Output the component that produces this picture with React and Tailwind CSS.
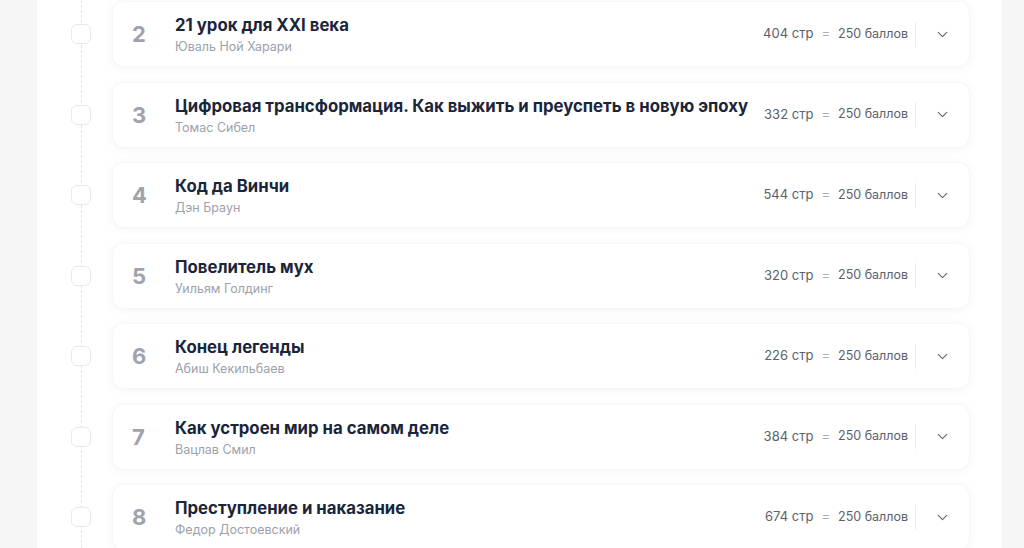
import React from 'react';
import { ChevronDown } from 'lucide-react';

const books = [
  { n: 2, title: '21 урок для XXI века', author: 'Юваль Ной Харари', pages: 404 },
  { n: 3, title: 'Цифровая трансформация. Как выжить и преуспеть в новую эпоху', author: 'Томас Сибел', pages: 332 },
  { n: 4, title: 'Код да Винчи', author: 'Дэн Браун', pages: 544 },
  { n: 5, title: 'Повелитель мух', author: 'Уильям Голдинг', pages: 320 },
  { n: 6, title: 'Конец легенды', author: 'Абиш Кекильбаев', pages: 226 },
  { n: 7, title: 'Как устроен мир на самом деле', author: 'Вацлав Смил', pages: 384 },
  { n: 8, title: 'Преступление и наказание', author: 'Федор Достоевский', pages: 674 },
];

const BookRow = ({ book }) => (
  <div className="flex items-center">
    <div className="w-[75px] shrink-0 pl-[34px]">
      <div className="relative z-10 w-5 h-5 rounded-md border border-[#e8e9ec] bg-white"></div>
    </div>
    <div className="flex-1 h-[66px] flex items-center bg-white rounded-xl border border-[#f7f7f8] shadow-[0_1px_10px_rgba(0,0,0,0.05)] pl-[19px]">
      <div className="w-[43px] shrink-0 text-[22px] font-bold text-[#9ea3ad] leading-none">{book.n}</div>
      <div className="flex-1 min-w-0 flex flex-col pt-[2px]">
        <div className="text-[16.75px] leading-[22px] font-bold text-[#1b253a] whitespace-nowrap">{book.title}</div>
        <div className="text-[12.5px] leading-[18px] mt-[2px] text-[#9ca1ab]">{book.author}</div>
      </div>
      <div className="flex items-center shrink-0 pl-3 text-[13px] text-[#5b616b]">
        <span>{book.pages} стр</span>
        <span className="mx-[8px] text-[#a8adb5]">=</span>
        <span className="text-[12.5px]">250 баллов</span>
      </div>
      <div className="ml-[7px] w-px h-[25px] bg-[#ebecef]"></div>
      <div className="w-[53px] shrink-0 flex justify-center text-[#5f6570]">
        <ChevronDown size={17} strokeWidth={1.6} />
      </div>
    </div>
  </div>
);

export default function App() {
  return (
    <div className="w-[1024px] h-[548px] overflow-hidden bg-[#f6f6f7] pl-[37px] pr-[22px]" style={{ fontFamily: 'Inter, "Noto Sans", sans-serif' }}>
      <div className="relative h-full bg-white pr-[32px] pt-px">
        <div className="absolute left-[44px] top-0 bottom-0 border-l border-dashed border-[#e3e4e8]"></div>
        <div className="flex flex-col gap-[14.5px]">
          {books.map((b) => (
            <BookRow key={b.n} book={b} />
          ))}
        </div>
      </div>
    </div>
  );
}
